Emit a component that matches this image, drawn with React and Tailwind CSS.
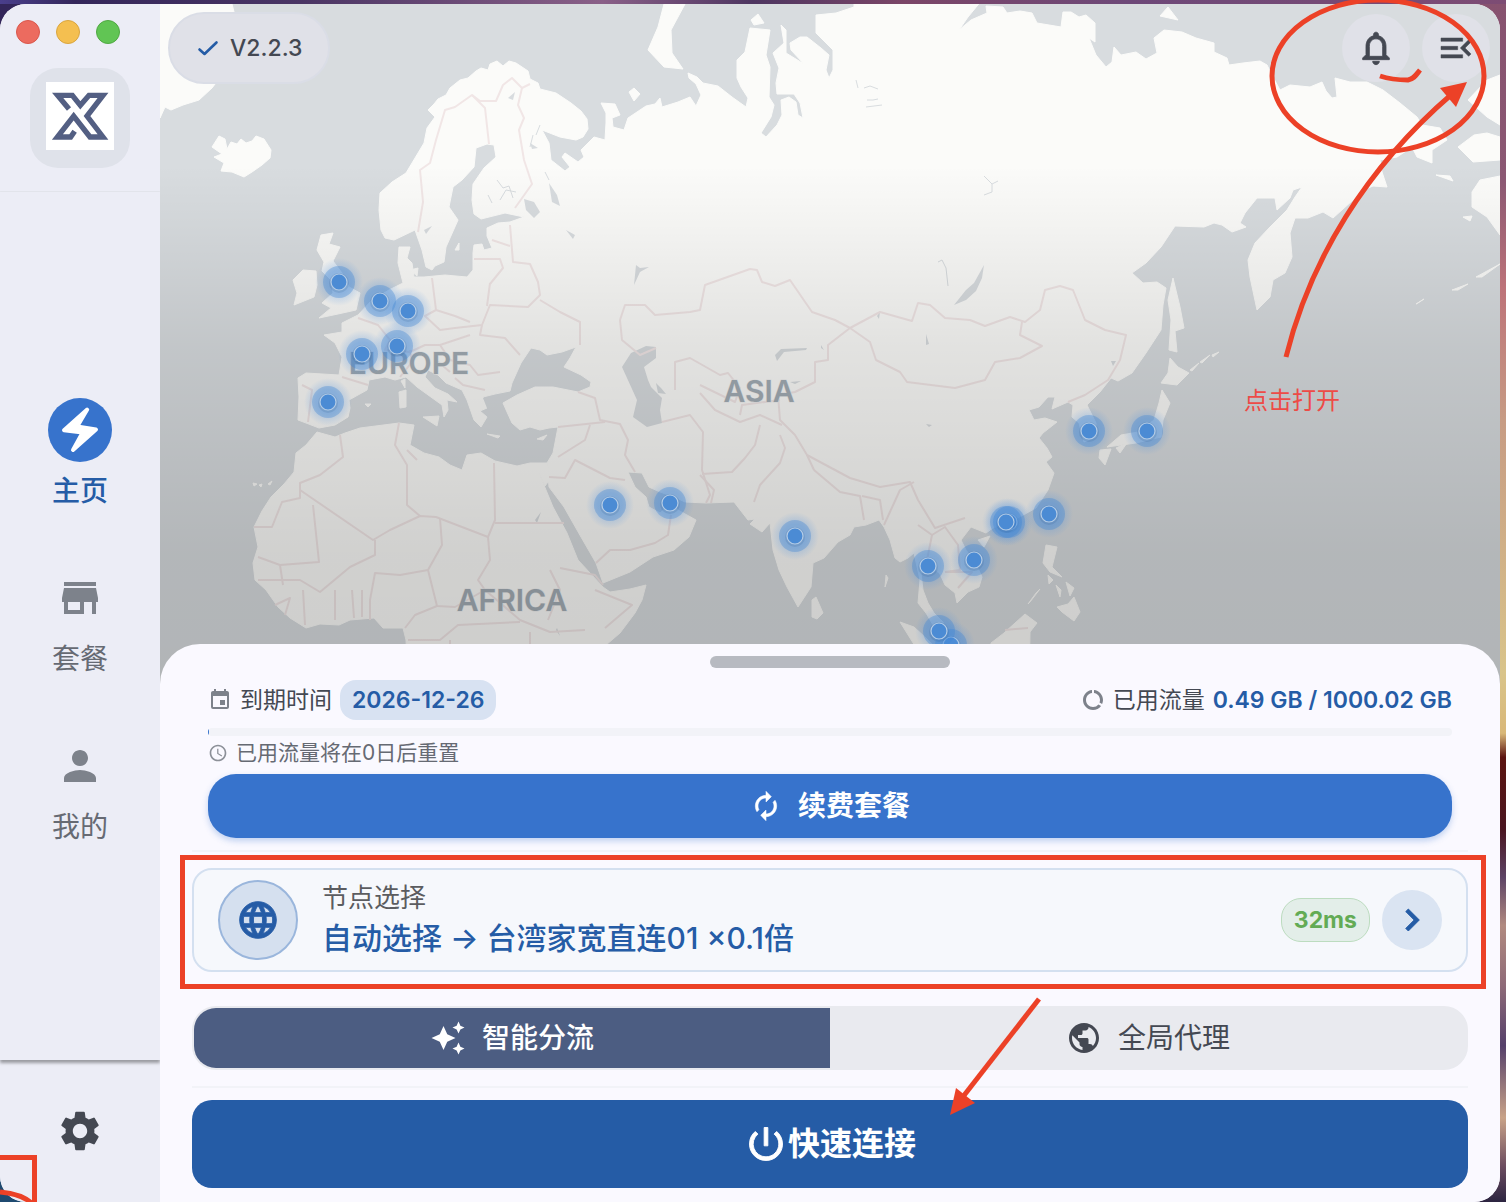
import React, { useState } from 'react';
import {
  MdAccessTime,
  MdAutoAwesome,
  MdAutorenew,
  MdChevronRight,
  MdDataUsage,
  MdEvent,
  MdLanguage,
  MdMenuOpen,
  MdNotificationsNone,
  MdPerson,
  MdPowerSettingsNew,
  MdPublic,
  MdSettings,
  MdStore,
} from 'react-icons/md';

const PINS = [
  [339, 282], [380, 301], [408, 311], [362, 354], [397, 346], [328, 402],
  [610, 505], [670, 503], [795, 536], [928, 566], [974, 560], [1009, 522],
  [1006, 522], [1049, 514], [1089, 431], [1147, 431], [951, 645], [939, 631],
];

const LAND = [
  // Eurasia
  'M428 110L434 104L438 99L446 95L450 88L460 80L468 78L476 71L481 68L488 70L490 64L497 61L503 66L509 61L516 63L528 71L530 79L538 83L540 89L556 93L571 103L581 111L587 119L588 129L583 137L576 140L560 137L542 130L549 143L551 160L565 171L570 167L562 157L565 153L578 162L584 157L581 150L594 137L605 140L606 123L606 113L601 103L615 104L620 115L612 118L613 127L624 130L628 118L646 106L655 104L660 98L662 107L678 102L690 97L696 106L701 95L696 84L689 78L688 73L697 77L703 83L718 86L732 97L746 107L748 98L741 87L737 78L737 60L745 52L750 28L770 30L766 55L770 67L769 97L774 105L771 117L761 133L766 137L777 125L782 115L781 100L789 97L796 102L798 115L803 118L800 103L794 94L777 94L776 83L779 68L773 53L784 43L781 25L786 30L786 53L804 64L791 50L790 43L800 37L807 37L821 48L829 55L826 70L829 78L833 70L833 50L825 42L816 33L816 15L836 13L854 7L854 0L982 0L968 17L959 30L971 20L987 13L986 6L1003 7L1007 13L1020 11L1032 13L1037 23L1061 27L1063 12L1071 12L1079 17L1086 15L1095 23L1095 42L1089 38L1096 55L1106 67L1112 62L1114 47L1121 55L1136 52L1146 59L1157 53L1154 38L1164 30L1182 32L1196 38L1214 43L1214 52L1227 58L1229 65L1243 63L1260 61L1267 65L1273 77L1280 90L1290 85L1310 87L1322 82L1326 91L1332 98L1337 97L1335 78L1350 82L1367 82L1383 90L1400 103L1417 117L1422 125L1440 128L1447 140L1432 150L1432 163L1417 157L1412 147L1397 157L1380 160L1382 172L1387 187L1373 186L1363 190L1353 200L1333 218L1323 212L1308 218L1295 218L1290 233L1292 257L1285 273L1273 280L1270 297L1257 310L1250 277L1248 260L1255 243L1270 227L1287 210L1295 197L1302 187L1293 190L1290 198L1277 210L1275 198L1257 198L1245 213L1240 223L1246 227L1232 232L1222 225L1214 223L1204 227L1175 226L1161 247L1146 263L1132 273L1143 283L1157 282L1166 288L1163 305L1161 330L1146 353L1132 373L1118 381L1111 378L1100 392L1087 405L1096 423L1096 437L1084 442L1079 423L1072 417L1073 405L1068 402L1052 409L1055 397L1048 397L1039 407L1029 410L1034 420L1045 418L1057 422L1043 433L1039 438L1047 448L1052 457L1046 462L1054 473L1048 490L1036 508L1014 520L993 528L986 533L971 527L961 540L966 550L976 564L982 577L979 587L968 592L957 603L955 593L945 585L940 574L932 567L921 573L923 590L928 603L934 613L943 622L946 637L936 630L926 613L918 603L920 580L914 553L908 558L900 562L895 558L890 540L884 527L879 520L866 525L854 527L850 535L838 542L824 558L813 563L811 587L798 607L787 587L779 570L773 550L770 523L762 532L750 524L755 519L748 520L734 502L706 503L685 502L674 497L660 492L649 487L642 473L628 472L635 487L646 497L649 507L660 513L671 503L678 510L696 520L689 537L674 550L653 557L630 572L603 583L596 563L581 537L564 507L549 487L547 463L553 453L558 427L549 428L540 430L530 427L520 430L512 423L507 412L503 403L517 395L535 387L553 387L578 392L590 387L591 382L581 375L564 367L570 358L576 347L562 352L547 355L540 350L531 348L521 363L512 383L510 391L495 394L483 397L487 408L480 411L487 417L481 427L474 420L467 400L462 390L446 383L438 375L428 370L425 377L435 388L448 394L457 402L447 400L448 410L444 417L442 405L417 387L406 377L395 380L385 377L369 380L367 390L349 400L350 408L348 417L335 425L319 428L306 423L298 420L299 397L298 378L306 373L339 375L342 357L335 343L324 335L342 332L342 323L358 315L372 300L389 290L403 283L398 263L399 247L410 247L407 258L412 263L414 277L424 277L445 275L467 277L473 270L473 253L474 245L482 244L484 250L492 248L487 236L487 228L498 223L510 222L524 217L505 213L481 219L474 214L472 200L473 184L484 168L496 157L494 145L487 144L476 148L474 167L462 180L453 187L449 207L458 220L446 247L444 262L435 266L432 270L426 267L422 250L415 230L394 240L385 238L381 230L379 210L380 193L392 182L406 173L424 143L427 128L435 117Z',
  // Africa
  'M317 432L335 437L345 433L360 428L399 423L414 425L410 445L424 453L439 457L450 465L462 470L467 455L481 453L495 461L517 466L530 463L547 463L551 478L545 486L539 473L553 507L567 533L578 560L603 587L610 592L630 589L646 585L642 600L635 613L620 633L606 645L606 690L408 690L406 640L403 628L383 628L374 618L350 620L339 625L320 624L306 628L290 618L278 607L266 590L255 580L253 563L258 547L254 527L262 511L271 497L284 484L294 472L296 453L306 445Z',
  // Greenland
  'M160 4L232 4L234 12L222 40L222 75L212 88L199 100L183 105L171 110L165 107L160 118Z',
  // Iceland
  'M212 147L219 136L225 139L227 149L231 142L237 144L241 139L246 143L252 141L256 136L264 139L271 150L270 158L262 165L252 172L244 177L232 172L221 171L224 163L214 157L222 154Z',
  // Great Britain, Ireland
  'M321 235L333 233L329 244L340 247L333 261L342 273L349 287L360 293L356 310L338 314L319 318L331 308L322 303L333 293L331 280L322 271L324 262L317 250Z',
  'M303 270L316 271L317 285L314 297L294 305L297 293L293 280Z',
  // Arctic islands
  'M664 4L685 4L671 30L672 53L683 69L664 67L648 50L658 27Z',
  'M629 92L634 88L640 94L634 101Z',
  'M751 20L758 14L764 23L754 25Z',
  'M1160 16L1168 7L1178 20Z',
  // Sakhalin and Japan
  'M1173 278L1180 307L1184 328L1175 331L1177 352L1169 350L1171 320L1168 300Z',
  'M1170 358L1178 367L1189 373L1177 385L1161 383L1168 373Z',
  'M1162 390L1170 403L1163 420L1161 437L1136 443L1107 447L1121 435L1138 432L1154 420L1159 403Z',
  'M1100 450L1111 449L1105 465L1099 458Z',
  'M1116 448L1127 443L1120 453Z',
  'M1190 370L1199 363L1192 371Z M1200 362L1210 355L1202 363Z M1212 355L1219 352L1213 357Z',
  // South and south-east Asia
  'M812 600L816 597L823 613L817 619L812 617Z',
  'M978 540L990 536L984 547Z',
  'M1046 545L1057 547L1052 567L1062 577L1050 572L1043 563Z',
  'M1057 607L1068 604L1074 597L1080 612L1074 621L1062 612Z',
  'M1056 585L1061 590L1060 597Z M1066 582L1074 588L1070 596Z M1048 575L1053 580L1049 584Z',
  'M1040 589L1030 602L1028 604L1036 593Z',
  'M991 643L1004 633L1025 614L1037 623L1030 632L1029 690L991 690Z',
  'M900 622L914 627L926 638L938 650L930 670Z',
  'M886 575L888 578L885 587Z',
  // Mediterranean islands
  'M423 417L439 416L437 426Z M399 392L406 390L406 407L400 408Z M401 381L405 379L405 388Z M487 434L500 436L498 438Z M537 439L547 435L543 440Z M365 404L371 404L368 407Z',
  // Canary islands
  'M253 483L257 484L254 486Z M259 485L262 484L261 487Z M268 484L272 481L270 485Z',
  // Denmark, Gotland
  'M410 270L418 268L417 276Z M455 250L459 243L459 250Z',
  // Alaska
  'M1500 75L1487 80L1468 100L1487 117L1500 125Z',
  'M1458 147L1474 135L1487 133L1500 137L1500 160L1473 162Z',
  'M1500 176L1480 180L1472 192L1472 207L1487 217L1500 235Z',
  'M1463 217L1472 216L1470 221Z M1436 175L1450 176L1453 181Z M1452 290L1468 284L1458 290Z M1476 277L1500 264L1482 277Z M1418 303L1424 299L1416 304Z',
];

// Inland seas and the larger lakes
const WATER = [
  'M656 347L656 358L644 367L648 380L651 387L662 398L660 410L662 423L647 427L633 417L637 400L622 367L631 353L646 346Z',
  'M984 265L982 278L976 291L966 300L954 305L966 290L974 283Z',
  'M524 199L534 202L540 212L534 218L526 210Z',
  'M549 183L557 195L560 206L552 202Z',
  'M566 230L575 235L573 239Z M530 143L538 148L532 149Z M508 98L515 92L513 100Z M424 230L432 226L426 234Z',
  'M636 265L634 285L640 272L649 267L640 268Z',
  'M775 355L781 349L807 348L806 350L784 352L777 361Z',
  'M483 398L500 395L494 402L502 411L510 425L498 420L490 425L487 408Z',
  'M926 334L929 344L926 345Z M821 345L824 350L821 348Z M877 316L880 312L879 319Z M1111 361L1116 361L1113 366Z M535 520L541 512L537 523Z M557 628L560 636L556 630Z',
  'M656 383L661 388L666 394L658 393Z M790 382L801 381L795 384Z M926 424L932 425L929 427Z',
];

const BORDERS = [
  'M418 232L423 202L420 170L430 163L436 140L445 110L455 107L472 95L480 101L496 101L503 85L512 78L522 88L518 105L524 118L519 130L524 160L532 184L515 208',
  'M472 95L485 108L489 144',
  'M522 88L530 84',
  'M432 278L436 310L425 316L440 330L455 328L482 325L490 305L528 307L540 295L538 282L530 264L513 262L510 225',
  'M490 283L487 306 M492 240L510 246 M474 259L500 259L503 268L490 284',
  'M436 310L455 316L470 322 M540 300L560 312L580 322L580 345 M482 325L480 335L505 338L520 355',
  'M358 318L378 325L390 340L385 350L410 352L425 345L440 345L455 340L470 335',
  'M342 377L368 385 M302 385L312 390L308 422 M410 350L412 362L400 377',
  'M440 345L450 360L470 365L478 375L500 372 M455 378L463 385L485 390 M436 360L450 372',
  'M578 392L595 398L600 420L620 424L628 440L625 455L635 472 M558 427L605 422 M558 457L585 440L590 425',
  'M549 477L565 478L575 460L610 478L625 480 M596 563L610 550L630 550L655 543L668 535L671 515',
  'M620 320L625 305L645 305L655 315L690 312L700 310L705 285L750 269L757 270L762 282L775 286L790 280L812 312L835 320L850 328L880 312L912 321L918 303L930 305L945 318L970 320L985 326L1010 317L1025 322L1040 310L1045 290L1060 286L1073 290L1085 320L1105 330L1126 335L1120 360L1108 380L1085 395L1068 402',
  'M850 328L828 345L828 360L815 362L815 382L795 392L778 395L780 420L795 435L807 455L850 478L880 487L910 482L918 500L935 528L965 518',
  'M850 328L870 342L876 360L900 372L907 382L955 388L985 380L995 362L1020 358L1042 346L1020 335L1022 322',
  'M620 320L622 340L640 355L656 348 M675 390L675 362L690 358L720 375L728 373L740 388L735 402L700 385',
  'M700 393L715 410L740 422L760 415L782 425 M740 415L742 405L780 400',
  'M662 422L690 415L703 432L702 470L710 495L706 503 M702 474L732 472L745 458L755 445L760 425',
  'M700 475L714 490L711 503 M754 502L760 485L780 463L785 448L780 435',
  'M814 470L840 492L860 496L864 520 M807 455L814 470 M862 496L880 500L883 520',
  'M884 525L900 490L914 482 M918 525L932 535L925 570 M932 535L945 527L958 545L960 570L945 572 M945 572L972 572L958 588',
  'M340 435L343 457L320 475L300 483L300 498L282 502L272 527L254 527',
  'M300 490L373 540L390 530L420 516L436 517L488 537L495 520L494 463 M495 523L564 523',
  'M399 423L395 445L407 465L407 505L420 516 M407 450L417 460',
  'M313 505L319 562L280 565L258 557 M375 540L375 555L350 567L320 592L300 580L258 580 M280 565L283 585',
  'M440 518L442 545L428 570L400 575L375 573L370 600L370 620 M488 537L490 560L478 580L485 590L455 607L437 606L428 570',
  'M437 606L415 615L405 628 M485 590L520 620L550 632L585 630 M550 570L560 590L548 620 M560 568L595 575L603 585 M595 590L632 605L605 628',
  'M335 590L335 620 M352 590L354 618 M362 590L362 617 M303 590L305 625 M275 605L290 598L285 615',
  'M408 640L440 640L458 625L520 622 M530 632L530 690 M450 640L450 690',
  'M1005 630L1028 628',
];

const WorldMap = () => (
  <svg
    viewBox="160 4 1340 680"
    preserveAspectRatio="xMidYMin slice"
    className="block h-full w-full"
    aria-label="节点地图"
    role="img"
  >
    <defs>
      <linearGradient id="shade" gradientUnits="userSpaceOnUse" x1="0" y1="165" x2="0" y2="684">
        <stop offset="0" stopColor="#000" stopOpacity="0" />
        <stop offset="0.35" stopColor="#000" stopOpacity="0.1" />
        <stop offset="0.75" stopColor="#000" stopOpacity="0.17" />
        <stop offset="1" stopColor="#000" stopOpacity="0.18" />
      </linearGradient>
      <radialGradient id="glow">
        <stop offset="0.5" stopColor="#4a90e2" stopOpacity="0.3" />
        <stop offset="1" stopColor="#4a90e2" stopOpacity="0" />
      </radialGradient>
    </defs>
    <rect x="160" y="4" width="1340" height="680" fill="#d8dcdf" />
    <g fill="#fbfbf9" stroke="#fbfbf9" strokeWidth="1" strokeLinejoin="round">
      {LAND.map((d) => (
        <path key={d} d={d} />
      ))}
    </g>
    <g fill="#d8dcdf">
      {WATER.map((d) => (
        <path key={d} d={d} />
      ))}
    </g>
    <g fill="none" stroke="#d8dcdf" strokeWidth="1">
      <path d="M864 88l6-2 8 3M867 100l6 0 5-1M866 107l16-2M856 80l2 8M984 176l8 8 6-3M992 184l0 8-8 3M938 262l4-2 4 8 2 18" />
      <path d="M497 180l6 8 6-2 4 12M500 200l6-10 10 2M540 125l-4 10M533 135l-3 12M545 172l4 8M488 195l4 8" />
    </g>
    <g fill="none" stroke="#f1e6e6" strokeWidth="2" strokeLinejoin="round">
      {BORDERS.map((d) => (
        <path key={d} d={d} />
      ))}
    </g>
    <g
      fill="#a3adb5"
      stroke="#ecedee"
      strokeWidth="1"
      paintOrder="stroke"
      textAnchor="middle"
      className="font-['Inter',sans-serif] text-[30px] font-semibold"
    >
      <text x="409" y="374">EUROPE</text>
      <text x="759" y="402">ASIA</text>
      <text x="512" y="611">AFRICA</text>
    </g>
    <rect x="160" y="4" width="1340" height="680" fill="url(#shade)" />
    {PINS.map(([x, y]) => (
      <g key={`${x}-${y}`}>
        <circle cx={x} cy={y} r="24" fill="url(#glow)" />
        <circle cx={x} cy={y} r="16" fill="#3f86d2" fillOpacity="0.36" />
        <circle cx={x} cy={y + 1} r="10" fill="#1f4f86" fillOpacity="0.15" />
        <circle cx={x} cy={y} r="8" fill="#4b8bd4" stroke="#b4cce6" strokeWidth="1.2" />
      </g>
    ))}
  </svg>
);

const BoltIcon = () => (
  <svg viewBox="0 0 64 64" className="size-16" aria-hidden="true">
    <circle cx="32" cy="32" r="32" fill="#3773cc" />
    <path
      d="M39.2 11.6L16 32.2L34.5 34.6L25 52L48 31.6L29.2 28.6Z"
      fill="#fff"
      stroke="#fff"
      strokeWidth="4"
      strokeLinejoin="round"
    />
  </svg>
);

const Logo = () => (
  <div className="flex size-[100px] items-center justify-center rounded-[28px] bg-[#dfe2ea] pb-1">
    <svg viewBox="0 0 204 204" className="size-[68px] bg-white" role="img" aria-label="X">
      <path
        d="M69 81L35 40H79L103 70L129 40H171L123 102L171 165H132L83 102L34 165H74L86 148"
        fill="none"
        stroke="#535f83"
        strokeWidth="16"
        strokeMiterlimit="6"
      />
    </svg>
  </div>
);

const NavItem = ({ label, active, children }) => (
  <a href="#" aria-current={active ? 'page' : undefined} className="flex h-[168px] flex-col items-center pt-6">
    <span className="flex size-16 items-center justify-center text-[#7d828b]">{children}</span>
    <span
      className={`mt-[11px] text-[28px] leading-9 ${active ? 'font-medium text-[#255ca6]' : 'text-[#666a73]'}`}
    >
      {label}
    </span>
  </a>
);

const Sidebar = () => (
  <aside className="flex w-40 shrink-0 flex-col bg-[#ecedf6]">
    <div className="flex gap-4 px-4 pt-4">
      <span className="size-6 rounded-full border border-[#d9574c] bg-[#ec6b5f]" />
      <span className="size-6 rounded-full border border-[#d9a53f] bg-[#f4bf50]" />
      <span className="size-6 rounded-full border border-[#50a843] bg-[#61c554]" />
    </div>
    <div className="flex justify-center pt-6 pb-[23px]">
      <Logo />
    </div>
    <hr className="border-t border-[#e3e5ec]" />
    <nav className="flex flex-1 flex-col justify-center shadow-[0_3px_3px_rgba(0,0,0,0.35)]">
      <NavItem label="主页" active>
        <BoltIcon />
      </NavItem>
      <NavItem label="套餐">
        <MdStore className="size-12" />
      </NavItem>
      <NavItem label="我的">
        <MdPerson className="size-12" />
      </NavItem>
    </nav>
    <div className="flex h-[142px] items-center justify-center">
      <button type="button" aria-label="设置" className="text-[#444852]">
        <MdSettings className="size-12" />
      </button>
    </div>
  </aside>
);

const TopBar = () => (
  <div className="absolute inset-x-0 top-0 flex items-center justify-between py-2 pr-2.5 pl-2">
    <button
      type="button"
      className="flex h-[72px] items-center gap-2.5 rounded-full border-2 border-[#dadde6] bg-[#e0e1e8] px-[26px] text-[23px] font-medium text-[#444852]"
    >
      <svg viewBox="0 0 24 24" className="size-6" aria-hidden="true">
        <path
          d="M3.5 13.5L8.5 18L20.5 6.5"
          fill="none"
          stroke="#255ca6"
          strokeWidth="2.6"
          strokeLinecap="round"
          strokeLinejoin="round"
        />
      </svg>
      V2.2.3
    </button>
    <div className="flex gap-3 text-[#444852]">
      <button type="button" aria-label="通知" className="flex size-[68px] items-center justify-center rounded-full bg-[#e0e1e8]">
        <MdNotificationsNone className="size-10 [&>path:last-child]:stroke-[0.5]" />
      </button>
      <button type="button" aria-label="菜单" className="flex size-[68px] items-center justify-center rounded-full bg-[#e0e1e8]">
        <MdMenuOpen className="size-10 [&>path:last-child]:stroke-[0.3]" />
      </button>
    </div>
  </div>
);

const Plan = () => (
  <section className="px-4">
    <div className="flex h-10 items-center justify-between text-[23px] text-[#444852]">
      <div className="flex items-center gap-2">
        <MdEvent className="size-6 text-[#7d828b]" />
        <span>到期时间</span>
        <span className="flex h-10 items-center rounded-2xl bg-[#d8e2f2] px-3 font-semibold text-[#255ca6]">
          2026-12-26
        </span>
      </div>
      <div className="flex items-center gap-2">
        <MdDataUsage className="size-6 text-[#7d828b]" />
        <span>已用流量</span>
        <span className="font-semibold text-[#255ca6]">0.49 GB / 1000.02 GB</span>
      </div>
    </div>
    <div
      role="progressbar"
      aria-label="已用流量"
      aria-valuenow={0.49}
      aria-valuemax={1000.02}
      className="mt-2 h-2 overflow-hidden rounded-full bg-[#f2f3f8]"
    >
      <div className="h-full bg-[#3773cc]" style={{ width: `${(0.49 / 1000.02) * 100}%` }} />
    </div>
    <p className="mt-1 flex h-[26px] items-center gap-2 text-[21px] leading-[26px] text-[#666a73]">
      <MdAccessTime className="size-5 text-[#8c9098]" />
      已用流量将在0日后重置
    </p>
    <button
      type="button"
      className="mt-2 flex h-16 w-full items-center justify-center gap-4 rounded-[28px] bg-[#3773cc] text-[28px] font-bold text-white shadow-[0_3px_6px_rgba(55,115,204,0.3)]"
    >
      <MdAutorenew className="size-8 [&>path:last-child]:stroke-[0.4]" />
      续费套餐
    </button>
  </section>
);

const NodeCard = () => (
  <button
    type="button"
    className="mt-4 flex h-[104px] w-full items-center rounded-[20px] border-2 border-[#d4e0f0] bg-[#f6f8fc] px-6 text-left"
  >
    <span className="flex size-20 items-center justify-center rounded-full border-2 border-[#9ab6dc] bg-[#d5e0ef] text-[#255ca6]">
      <MdLanguage className="size-11 [&>path:last-child]:stroke-[0.5]" />
    </span>
    <span className="ml-6 flex flex-1 flex-col">
      <span className="text-[26px] leading-9 text-[#5b5c60]">节点选择</span>
      <span className="text-[30px] leading-11 font-medium text-[#255ca6]">自动选择 → 台湾家宽直连01 ×0.1倍</span>
    </span>
    <span className="flex h-11 items-center rounded-[20px] border border-[#bcdcbf] bg-[#e3eee9] px-3 text-[23px] font-bold text-[#63ab55]">
      32ms
    </span>
    <span className="ml-3 flex size-15 items-center justify-center rounded-full bg-[#dae4f2] text-[#255ca6]">
      <MdChevronRight className="size-11 [&>path:last-child]:stroke-[0.5]" />
    </span>
  </button>
);

const ModeTabs = () => {
  const [mode, setMode] = useState('smart');
  const base = 'flex flex-1 items-center justify-center gap-4 text-[28px]';
  const on = 'bg-[#4c5d82] font-medium text-white';
  const off = 'text-[#444852]';

  return (
    <div className="mt-[34px] flex h-16 overflow-hidden rounded-[24px] border-2 border-[#e9eaef] bg-[#e9eaef]">
      <button
        type="button"
        aria-pressed={mode === 'smart'}
        onClick={() => setMode('smart')}
        className={`${base} ${mode === 'smart' ? on : off}`}
      >
        <MdAutoAwesome className="size-9" />
        智能分流
      </button>
      <button
        type="button"
        aria-pressed={mode === 'global'}
        onClick={() => setMode('global')}
        className={`${base} ${mode === 'global' ? on : off}`}
      >
        <MdPublic className="size-9" />
        全局代理
      </button>
    </div>
  );
};

// Red pen marks drawn over the window
const Markup = () => (
  <svg
    viewBox="0 0 1506 1202"
    preserveAspectRatio="none"
    className="pointer-events-none absolute inset-0 h-full w-full"
    aria-hidden="true"
  >
    <g fill="none" stroke="#ec4127" strokeWidth="5">
      <ellipse cx="1378" cy="76" rx="106" ry="76" />
      <path d="M1380 76C1392 80 1402 80 1408 80C1414 79 1416 75 1420 70" />
      <path d="M1286 357C1310 260 1366 168 1452 94" />
      <rect x="182.5" y="857.5" width="1301" height="129" />
      <path d="M1039 999L962 1098" />
      <path d="M0 1157.5H34.5V1202" />
      <path d="M0 1192C12 1193 24 1196 33 1204" />
    </g>
    <g fill="#ec4127">
      <path d="M1467 82L1440 88L1456 107Z" />
      <path d="M950 1115L956 1088L975 1103Z" />
    </g>
    <text x="1244" y="409" fill="#ed4b47" className="font-['Noto_Sans_CJK_SC',sans-serif] text-[24px]">
      点击打开
    </text>
  </svg>
);

const App = () => {
  return (
    <div className="relative flex min-h-screen flex-col overflow-hidden bg-[linear-gradient(to_right,transparent_50%,#875272_50%),linear-gradient(#33265a_50%,#1f4a70_50%)] font-['Inter','Noto_Sans_CJK_SC',sans-serif]">
      <div className="absolute inset-y-0 right-0 w-8 bg-[linear-gradient(#87526f_0%,#8b5873_15%,#bd7379_24%,#c79c84_35%,#d9c48a_56%,#d9b878_61%,#5c1410_63%,#4a1520_69%,#5d4365_73%,#b18a80_77%,#8e6a78_82%,#55406a_87%,#c9a388_93%,#6d4d60_97%,#2c2440_100%)]" />
      <div className="relative h-1 bg-[linear-gradient(to_right,#4a3f8c_0%,#33265a_5%,#4a3564_20%,#8a6088_40%,#4d3560_50%,#7b4668_60%,#6d4878_75%,#7d4c74_100%)]" />
      <div className="relative mr-1.5 flex flex-1 overflow-hidden rounded-[26px] bg-[#faf9ff]">
        <Sidebar />
        <main className="relative flex min-w-0 flex-1 flex-col">
          <div className="relative h-0 min-h-[680px] flex-1">
            <WorldMap />
            <TopBar />
          </div>
          <div className="relative -mt-10 rounded-t-[40px] bg-[#faf9ff] px-8 pt-3 pb-3.5">
            <div className="mx-auto mb-3 h-3 w-60 rounded-full bg-[#b7bac1]" />
            <Plan />
            <hr className="mt-3 border-t-2 border-[#f2f3f8]" />
            <NodeCard />
            <ModeTabs />
            <hr className="mt-4 border-t-2 border-[#f2f3f8]" />
            <button
              type="button"
              className="mt-3 flex h-[88px] w-full items-center justify-center rounded-[20px] bg-[#255ca6] text-[32px] font-bold text-white"
            >
              <MdPowerSettingsNew className="size-11 [&>path:last-child]:stroke-[0.5]" />
              快速连接
            </button>
          </div>
        </main>
      </div>
      <Markup />
    </div>
  );
};

export default App;
